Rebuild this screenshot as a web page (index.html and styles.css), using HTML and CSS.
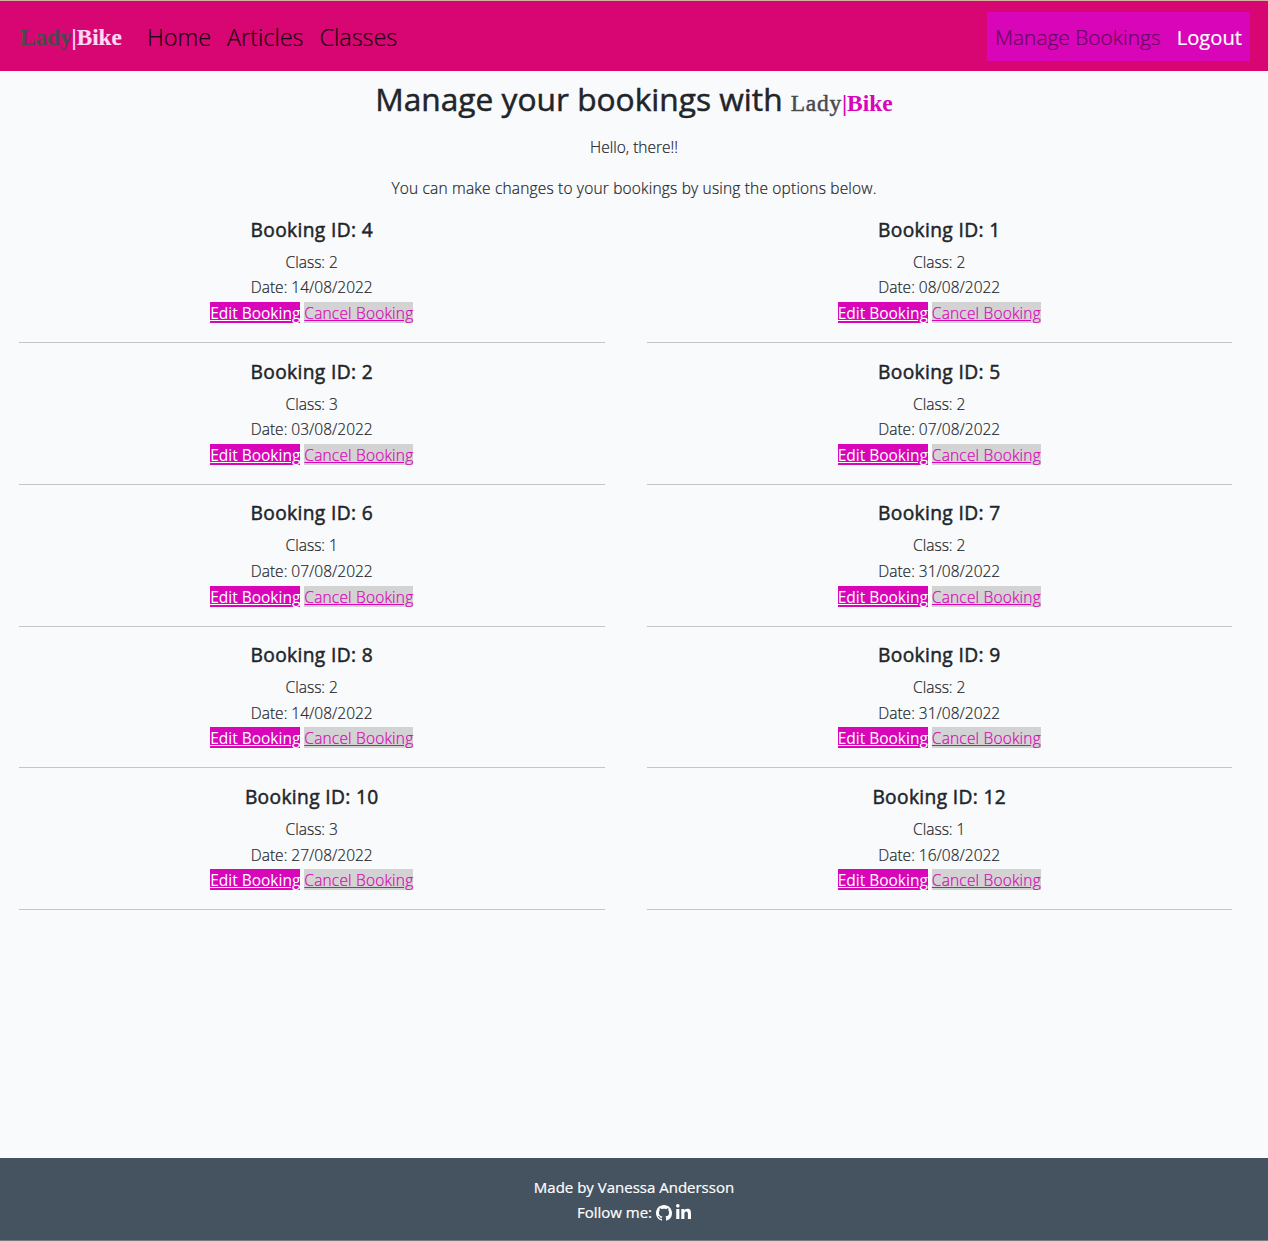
FILE: index.html
```html
<!DOCTYPE html>
<html lang="en">
<head>
<meta charset="utf-8">
<title>LadyBike - Manage Bookings</title>
<link rel="stylesheet" href="styles.css">
</head>
<body>
<header class="navbar">
  <a class="brand" href="#"><span class="lady">Lady</span><span class="bike">|Bike</span></a>
  <nav class="main-links"><a href="#">Home</a><a href="#">Articles</a><a href="#">Classes</a></nav>
  <nav class="account"><a class="manage" href="#">Manage Bookings</a><a class="logout" href="#">Logout</a></nav>
</header>
<main>
  <h1><span class="title">Manage your bookings with</span> <span class="brand"><span class="lady">Lady</span><span class="bike">|Bike</span></span></h1>
  <p class="hello">Hello, there!!</p>
  <p class="intro">You can make changes to your bookings by using the options below.</p>
  <div class="bookings">
    <section class="booking"><h2>Booking ID: 4</h2><div class="class">Class: 2</div><div class="date">Date: 14/08/2022</div><div class="actions"><a class="edit" href="#">Edit Booking</a><a class="cancel" href="#">Cancel Booking</a></div><hr></section>
    <section class="booking"><h2>Booking ID: 1</h2><div class="class">Class: 2</div><div class="date">Date: 08/08/2022</div><div class="actions"><a class="edit" href="#">Edit Booking</a><a class="cancel" href="#">Cancel Booking</a></div><hr></section>
    <section class="booking"><h2>Booking ID: 2</h2><div class="class">Class: 3</div><div class="date">Date: 03/08/2022</div><div class="actions"><a class="edit" href="#">Edit Booking</a><a class="cancel" href="#">Cancel Booking</a></div><hr></section>
    <section class="booking"><h2>Booking ID: 5</h2><div class="class">Class: 2</div><div class="date">Date: 07/08/2022</div><div class="actions"><a class="edit" href="#">Edit Booking</a><a class="cancel" href="#">Cancel Booking</a></div><hr></section>
    <section class="booking"><h2>Booking ID: 6</h2><div class="class">Class: 1</div><div class="date">Date: 07/08/2022</div><div class="actions"><a class="edit" href="#">Edit Booking</a><a class="cancel" href="#">Cancel Booking</a></div><hr></section>
    <section class="booking"><h2>Booking ID: 7</h2><div class="class">Class: 2</div><div class="date">Date: 31/08/2022</div><div class="actions"><a class="edit" href="#">Edit Booking</a><a class="cancel" href="#">Cancel Booking</a></div><hr></section>
    <section class="booking"><h2>Booking ID: 8</h2><div class="class">Class: 2</div><div class="date">Date: 14/08/2022</div><div class="actions"><a class="edit" href="#">Edit Booking</a><a class="cancel" href="#">Cancel Booking</a></div><hr></section>
    <section class="booking"><h2>Booking ID: 9</h2><div class="class">Class: 2</div><div class="date">Date: 31/08/2022</div><div class="actions"><a class="edit" href="#">Edit Booking</a><a class="cancel" href="#">Cancel Booking</a></div><hr></section>
    <section class="booking"><h2>Booking ID: 10</h2><div class="class">Class: 3</div><div class="date">Date: 27/08/2022</div><div class="actions"><a class="edit" href="#">Edit Booking</a><a class="cancel" href="#">Cancel Booking</a></div><hr></section>
    <section class="booking"><h2>Booking ID: 12</h2><div class="class">Class: 1</div><div class="date">Date: 16/08/2022</div><div class="actions"><a class="edit" href="#">Edit Booking</a><a class="cancel" href="#">Cancel Booking</a></div><hr></section>
  </div>
</main>
<footer>
  <div class="made">Made by Vanessa Andersson</div>
  <div class="follow"><span>Follow me:</span>
    <svg class="github" viewBox="0 0 16 16" aria-label="GitHub"><path d="M8 0C3.58 0 0 3.58 0 8c0 3.54 2.29 6.53 5.47 7.59.4.07.55-.17.55-.38 0-.19-.01-.82-.01-1.49-2.01.37-2.53-.49-2.69-.94-.09-.23-.48-.94-.82-1.13-.28-.15-.68-.52-.01-.53.63-.01 1.08.58 1.23.82.72 1.21 1.87.87 2.33.66.07-.52.28-.87.51-1.07-1.78-.2-3.64-.89-3.64-3.95 0-.87.31-1.59.82-2.15-.08-.2-.36-1.02.08-2.12 0 0 .67-.21 2.2.82.64-.18 1.32-.27 2-.27s1.36.09 2 .27c1.53-1.04 2.2-.82 2.2-.82.44 1.1.16 1.92.08 2.12.51.56.82 1.27.82 2.15 0 3.07-1.87 3.75-3.65 3.95.29.25.54.73.54 1.48 0 1.07-.01 1.93-.01 2.2 0 .21.15.46.55.38A8.01 8.01 0 0 0 16 8c0-4.42-3.58-8-8-8z"/></svg>
    <svg class="linkedin" viewBox="0 0 448 448" aria-label="LinkedIn"><path d="M100.3 448H7.4V148.900h92.900zM53.800 108.100C24.100 108.100 0 83.500 0 53.800a53.800 53.800 0 0 1 107.600 0c0 29.700-24.100 54.300-53.800 54.300zM447.900 448h-92.700V302.400c0-34.700-.7-79.200-48.300-79.200-48.300 0-55.700 37.700-55.700 76.700V448h-92.800V148.900h89.100v40.800h1.300c12.400-23.500 42.700-48.300 87.900-48.300 94 0 111.300 61.900 111.300 142.300V448z"/></svg>
  </div>
</footer>
</body>
</html>
```
FILE: styles.css
```css
* { box-sizing: border-box; }
body { margin: 0; height: 1241px; display: flex; flex-direction: column; background: #f9fafc; color: #212529; font: 300 15.5px/25.6px "Open Sans", "Noto Sans", sans-serif; -webkit-text-stroke: 0.2px; }
a { color: inherit; text-decoration: none; }
.navbar { height: 71px; flex: none; display: flex; align-items: center; padding: 1px 18px 0 20px; border-top: 1px solid #d3b2a0; background: #d80673; }
.brand { font: 700 23.2px/30px "Liberation Serif", serif; white-space: nowrap; }
.lady { color: #4a4a4f; }
.bike { color: #d905b8; }
.navbar .brand { width: 103px; }
.navbar .bike { color: #ffd9f2; }
.main-links { display: flex; gap: 16px; margin-left: 24px; font-size: 23.4px; line-height: 36px; color: #19030f; }
.account { display: flex; gap: 16px; height: 49px; margin-left: auto; margin-top: -1px; padding: 0 8px; background: #d905b8; font-size: 20.9px; line-height: 51px; }
.manage { color: #68055d; }
.logout { color: #fff; font-size: 20.2px; font-weight: 400; }
main { flex: 1; padding-top: 9px; text-align: center; }
h1 { height: 38.4px; margin: 0 0 16px; font-weight: 400; font-size: 31.7px; line-height: 38.4px; white-space: nowrap; -webkit-text-stroke: 0.5px; }
h1 .brand { font-size: 23.5px; -webkit-text-stroke: 0; }
h1 .lady { font-weight: 400; letter-spacing: 0.7px; -webkit-text-stroke: 0.5px; }
p { margin: 0 0 16px; }
.hello { padding-top: 0.6px; margin-bottom: 15.4px; }
.intro { letter-spacing: 0.18px; }
.bookings { display: grid; grid-template-columns: 1fr 1fr; column-gap: 42px; margin-top: -0.3px; padding: 0 36px 0 19px; }
h2 { margin: 0 0 8px; padding-top: 0.6px; font-size: 19.2px; font-weight: 400; line-height: 24px; letter-spacing: 0.35px; -webkit-text-stroke: 0.5px; }
.actions { display: flex; justify-content: center; gap: 4px; }
.actions a { height: 21px; margin: 1px 0 3px; line-height: 22px; text-decoration: underline; white-space: nowrap; }
.edit { background: #d905b8; color: #fff; font-weight: 400; -webkit-text-stroke: 0; }
.cancel { background: #d3d3d3; color: #d905b8; letter-spacing: 0.18px; }
hr { height: 1px; margin: 16px 0; border: 0; background: #c3c5c7; }
footer { height: 83px; flex: none; padding-top: 17px; border-bottom: 1px solid #777b80; background: #455260; color: #fff; text-align: center; font-size: 15px; font-weight: 400; }
.follow { display: flex; justify-content: center; align-items: center; margin-top: -0.6px; }
.github { width: 16px; height: 16px; margin-left: 4px; fill: #fff; }
.linkedin { width: 15px; height: 15px; margin: -2px 0 0 4px; fill: #fff; }
```
